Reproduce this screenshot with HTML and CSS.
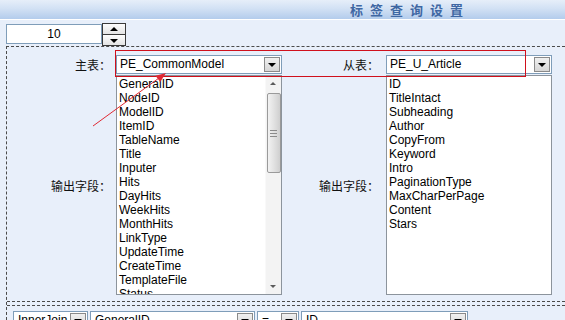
FILE: index.html
```html
<!DOCTYPE html>
<html lang="zh-CN">
  <head>
    <meta charset="UTF-8" />
    <meta name="viewport" content="width=device-width, initial-scale=1.0" />
    <title>标签查询设置</title>
    <link rel="stylesheet" href="styles.css">
  </head>
  <body>
    <div class="titlebar"><span class="title">标签查询设置</span></div>

    <div class="toolbar">
      <div class="spin">
        <div class="spin-input">10</div>
        <div class="spin-btns">
          <span class="spin-up"></span>
          <span class="spin-down"></span>
        </div>
      </div>
    </div>

    <div class="frame">
      <div class="tables">
        <label class="lbl">主表：</label>
        <div class="combo"><span class="combo-text">PE_CommonModel</span><span class="combo-btn"></span></div>
        <label class="lbl lbl-r">从表：</label>
        <div class="combo"><span class="combo-text">PE_U_Article</span><span class="combo-btn"></span></div>

        <label class="lbl">输出字段：</label>
        <div class="listbox">
          <ul class="items">
            <li>GeneralID</li>
            <li>NodeID</li>
            <li>ModelID</li>
            <li>ItemID</li>
            <li>TableName</li>
            <li>Title</li>
            <li>Inputer</li>
            <li>Hits</li>
            <li>DayHits</li>
            <li>WeekHits</li>
            <li>MonthHits</li>
            <li>LinkType</li>
            <li>UpdateTime</li>
            <li>CreateTime</li>
            <li>TemplateFile</li>
            <li>Status</li>
          </ul>
          <div class="scrollbar">
            <span class="sb-up"></span>
            <span class="sb-thumb"><i></i><i></i><i></i></span>
            <span class="sb-down"></span>
          </div>
        </div>
        <label class="lbl lbl-r">输出字段：</label>
        <div class="listbox">
          <ul class="items">
            <li>ID</li>
            <li>TitleIntact</li>
            <li>Subheading</li>
            <li>Author</li>
            <li>CopyFrom</li>
            <li>Keyword</li>
            <li>Intro</li>
            <li>PaginationType</li>
            <li>MaxCharPerPage</li>
            <li>Content</li>
            <li>Stars</li>
          </ul>
        </div>
      </div>

      <div class="sep"></div>

      <div class="join-row">
        <div class="combo combo-join"><span class="combo-text">InnerJoin</span><span class="combo-btn"></span></div>
        <div class="combo combo-field"><span class="combo-text">GeneralID</span><span class="combo-btn"></span></div>
        <div class="combo combo-op"><span class="combo-text">=</span><span class="combo-btn"></span></div>
        <div class="combo combo-field2"><span class="combo-text">ID</span><span class="combo-btn"></span></div>
      </div>
    </div>

    <!-- annotation drawn over the form -->
    <svg class="annot" width="565" height="320" viewBox="0 0 565 320">
      <rect x="115.5" y="50.5" width="410" height="26" fill="none" stroke="#d0101c" stroke-width="1" />
      <line x1="93" y1="126" x2="159" y2="78" stroke="#e02a34" stroke-width="1" />
      <polygon points="166,73 155.5,75.7 160.2,82.1" fill="#e02a34" />
    </svg>
  </body>
</html>
```

FILE: styles.css
```css
* {
  box-sizing: border-box;
}
body {
  margin: 0;
  background: #e8effa;
  font-family: "Liberation Sans", Arial, "Noto Sans CJK SC", sans-serif;
  font-size: 12px;
  color: #000;
  position: relative;
  height: 320px;
  overflow: hidden;
}
.titlebar {
  height: 20px;
  background: linear-gradient(#e6eef9, #d2e1f4 45%, #b3ccec);
  border-bottom: 1px solid #fff;
  padding-left: 350px;
}
.title {
  font-family: "Noto Sans CJK SC", sans-serif;
  font-weight: bold;
  font-size: 13px;
  line-height: 19px;
  letter-spacing: 7px;
  color: #3f67a3;
}

/* number spinner */
.toolbar {
  padding: 3px 0 0 6px;
}
.spin {
  display: flex;
  height: 23px;
}
.spin-input {
  width: 96px;
  height: 20px;
  margin-top: 1px;
  background: #fff;
  border: 1px solid #7f9db9;
  text-align: center;
  line-height: 18px;
}
.spin-btns {
  width: 24px;
  border: 1px solid #3a3a3a;
  display: flex;
  flex-direction: column;
}
.spin-up,
.spin-down {
  flex: 1;
  background: linear-gradient(#fdfdfd, #e4e4e4);
  position: relative;
}
.spin-up {
  border-bottom: 1px solid #3a3a3a;
}
.spin-up::after,
.spin-down::after {
  content: "";
  position: absolute;
  left: 7px;
  border-left: 4px solid transparent;
  border-right: 4px solid transparent;
}
.spin-up::after {
  top: 3px;
  border-bottom: 4px solid #000;
}
.spin-down::after {
  top: 4px;
  border-top: 4px solid #000;
}

/* dashed settings frame */
.frame {
  margin-left: 6px;
  border-top: 1px dashed #4a4a4a;
  border-left: 1px dashed #4a4a4a;
  padding-top: 8px;
  height: 274px;
}
.tables {
  display: grid;
  grid-template-columns: 109px 166px 104px 166px;
  grid-template-rows: 19px 220px;
  row-gap: 1px;
}
.lbl {
  font-family: "Noto Sans CJK SC", sans-serif;
  font-size: 12px;
  text-align: right;
  padding-right: 5px;
  align-self: center;
  color: #111;
}
.lbl-r {
  padding-right: 7px;
}

/* drop-down */
.combo {
  display: flex;
  height: 19px;
  background: #fff;
  border: 1px solid #7f9db9;
  padding: 1px;
}
.combo-text {
  flex: 1;
  padding-left: 2px;
  line-height: 15px;
  white-space: nowrap;
  overflow: hidden;
}
.combo-btn {
  width: 16px;
  background: linear-gradient(#f0f0f0, #d6d6d6);
  border: 1px solid #8a8a8a;
  position: relative;
}
.combo-btn::after {
  content: "";
  position: absolute;
  left: 3px;
  top: 5px;
  border-left: 4px solid transparent;
  border-right: 4px solid transparent;
  border-top: 4px solid #000;
}

/* list boxes */
.listbox {
  display: flex;
  background: #fff;
  border: 1px solid #8c949c;
  overflow: hidden;
}
.items {
  flex: 1;
  list-style: none;
  margin: 0;
  padding: 1px 0 0 2px;
  line-height: 14px;
  white-space: nowrap;
  overflow: hidden;
}
.scrollbar {
  width: 16px;
  background: #f3f3f3;
  border-left: 1px solid #f9f9f9;
  display: flex;
  flex-direction: column;
  align-items: center;
}
.sb-up,
.sb-down {
  height: 16px;
  width: 16px;
  position: relative;
}
.sb-up::after,
.sb-down::after {
  content: "";
  position: absolute;
  left: 4px;
  border-left: 3px solid transparent;
  border-right: 3px solid transparent;
}
.sb-up::after {
  top: 6px;
  border-bottom: 3px solid #5a5a5a;
}
.sb-down::after {
  top: 7px;
  border-top: 3px solid #5a5a5a;
}
.sb-thumb {
  width: 14px;
  height: 80px;
  margin-top: 1px;
  border: 1px solid #9a9a9a;
  border-radius: 2px;
  background: linear-gradient(90deg, #f2f2f2, #dedede 60%, #cfcfcf);
  display: flex;
  flex-direction: column;
  align-items: center;
  justify-content: center;
  gap: 2px;
}
.sb-thumb i {
  width: 7px;
  height: 1px;
  background: #8a8a8a;
}
.scrollbar .sb-down {
  margin-top: auto;
}

/* join row */
.sep {
  margin-top: 6px;
  height: 5px;
  border-top: 1px dashed #4a4a4a;
  border-bottom: 1px dashed #4a4a4a;
}
.join-row {
  display: flex;
  gap: 2px;
  margin-top: 5px;
  padding-left: 6px;
}
.combo-join {
  width: 75px;
}
.combo-field {
  width: 165px;
}
.combo-op {
  width: 42px;
}
.combo-field2 {
  width: 167px;
}
.join-row .combo-text {
  padding-left: 3px;
}

.annot {
  position: absolute;
  left: 0;
  top: 0;
  pointer-events: none;
}
```
